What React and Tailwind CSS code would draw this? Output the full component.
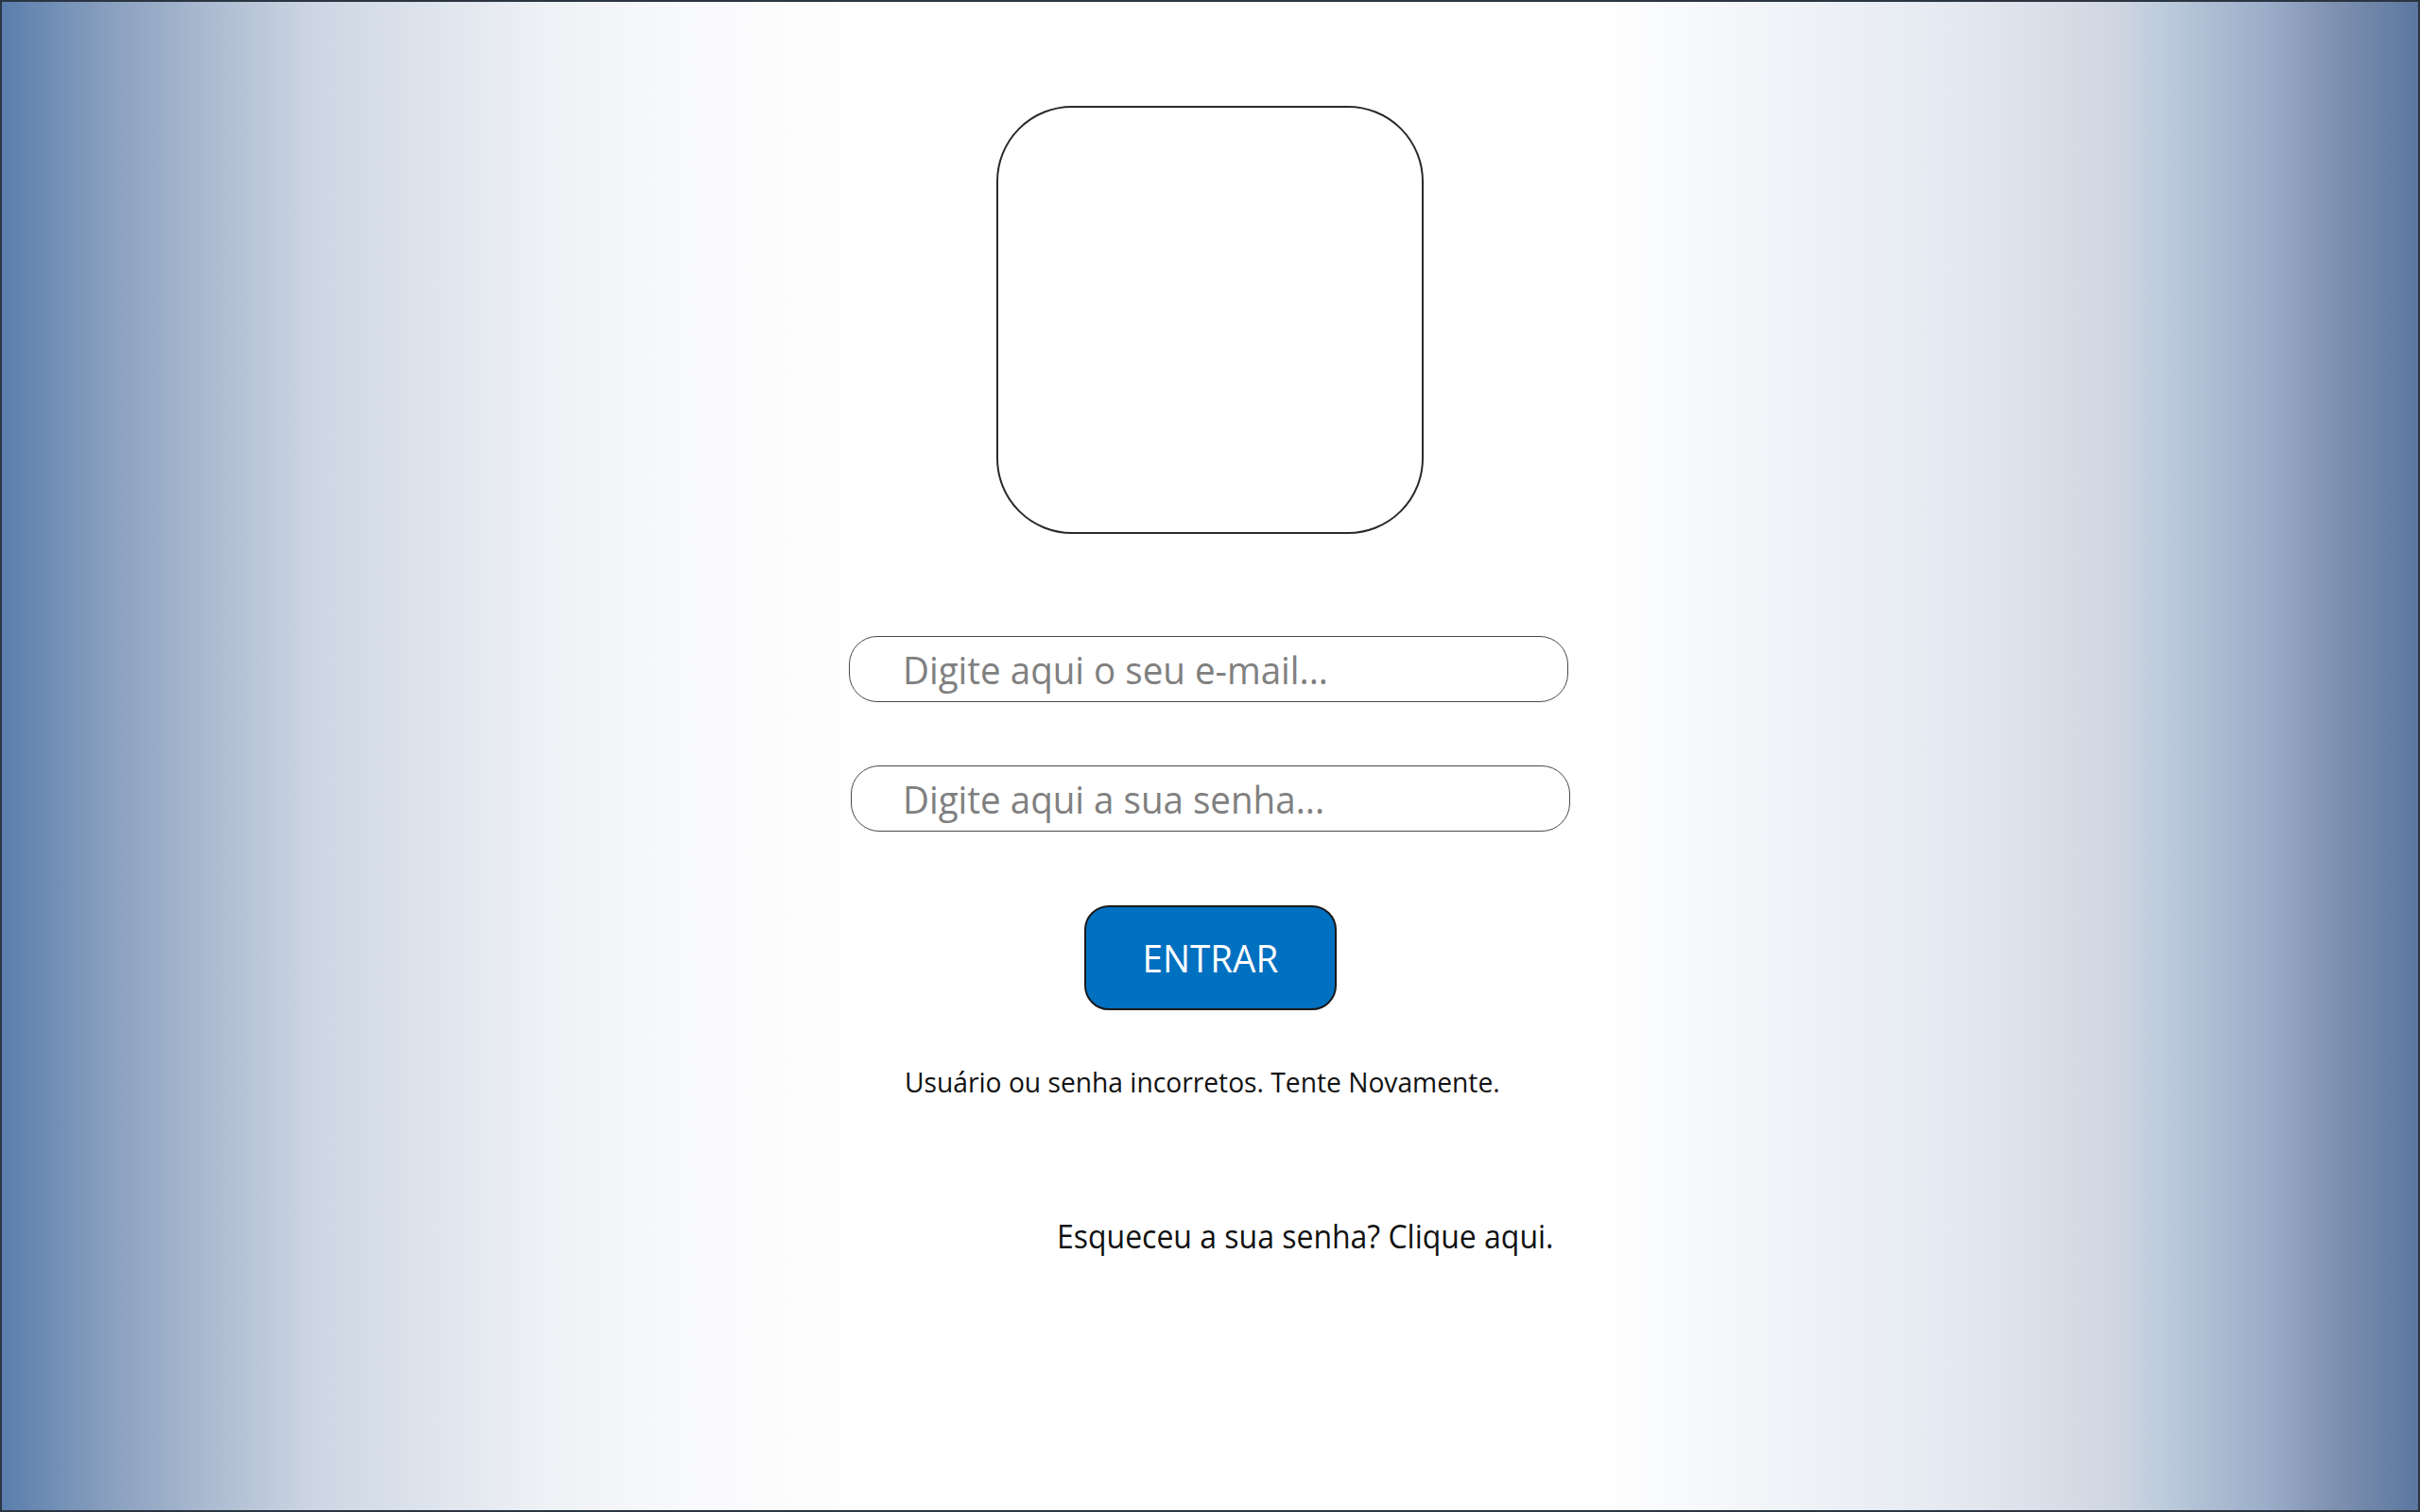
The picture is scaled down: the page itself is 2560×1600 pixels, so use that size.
export default function App() {
  return (
    <div
      className="w-full h-[1600px] overflow-hidden border-2 border-[#2b3542] bg-[linear-gradient(to_right,#5a7eac_0%,#8aa0bf_4.5%,#aebdd2_9%,#cdd6e3_13%,#dfe5ee_18%,#eef1f5_22.5%,#f8f9fb_28%,#fdfdfe_33.5%,#ffffff_36%,#ffffff_66%,#f5f7fa_71%,#e4e9f1_81%,#d0d6e1_87.5%,#bccbdc_89.5%,#9badc8_93.7%,#7f91b0_96.5%,#5b77a0_100%)]"
      style={{ fontFamily: '"Open Sans", "Noto Sans", sans-serif' }}
    >
      <div className="flex flex-col items-center pt-[110px]">
        <div className="w-[452px] h-[453px] rounded-[80px] border-2 border-[#2a2a2a] bg-white" />

        <div className="mt-[108px] mr-[3px] w-[761px] h-[70px] rounded-[30px] border-[1.5px] border-[#4a4a4a] bg-white flex items-center pl-[56px]">
          <span className="mt-[1px] text-[41px] leading-none text-[#808080] whitespace-nowrap origin-left scale-x-[0.94]">
            Digite aqui o seu e-mail...
          </span>
        </div>

        <div className="mt-[67px] ml-[1px] w-[761px] h-[70px] rounded-[30px] border-[1.5px] border-[#4a4a4a] bg-white flex items-center pl-[54px]">
          <span className="mt-[1px] text-[41px] leading-none text-[#808080] whitespace-nowrap origin-left scale-x-[0.94]">
            Digite aqui a sua senha...
          </span>
        </div>

        <button className="mt-[78px] w-[267px] h-[111px] rounded-[26px] border-2 border-[#1a1a1a] bg-[#0070c0] flex items-center justify-center">
          <span className="text-[41px] leading-none text-white scale-x-[0.94]">ENTRAR</span>
        </button>

        <div className="mt-[61px] mr-[15px] w-[631px] h-[30px]">
          <span className="block text-[30px] leading-none text-[#111] whitespace-nowrap origin-left scale-x-[0.94]">
            Usuário ou senha incorretos. Tente Novamente.
          </span>
        </div>

        <div className="mt-[131px] ml-[202px] w-[526px] h-[34px]">
          <span className="block text-[34px] leading-none text-[#111] whitespace-nowrap origin-left scale-x-[0.94]">
            Esqueceu a sua senha? Clique aqui.
          </span>
        </div>
      </div>
    </div>
  );
}
